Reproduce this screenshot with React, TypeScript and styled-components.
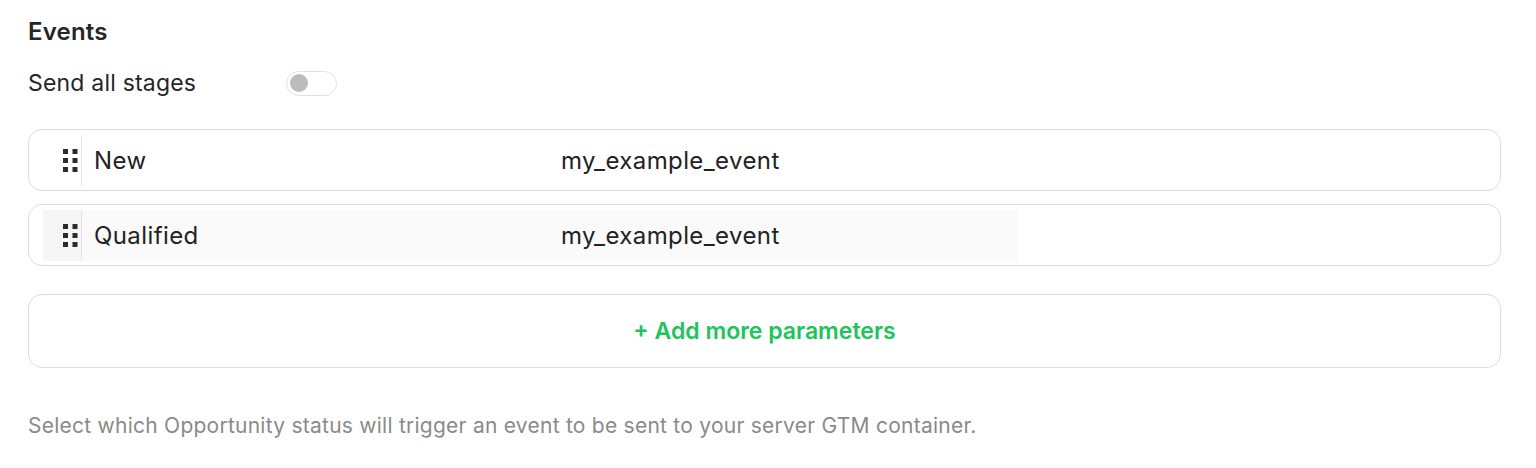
import React from "react";
import styled, { createGlobalStyle } from "styled-components";

const GlobalStyle = createGlobalStyle`
  body {
    margin: 0;
    background: #ffffff;
    font-family: Inter, "Liberation Sans", sans-serif;
    color: #222;
  }
`;

const Page = styled.div`
  padding: 19px 35px 0 28px;
`;

const Title = styled.h2`
  margin: 0;
  font-size: 24px;
  line-height: 26px;
  font-weight: 600;
  letter-spacing: 0.2px;
  color: #262626;
`;

const ToggleRow = styled.div`
  display: flex;
  align-items: center;
  margin-top: 25px;
  height: 26px;
`;

const ToggleLabel = styled.span`
  width: 258px;
  font-size: 23px;
  letter-spacing: 0.2px;
  color: #262626;
`;

const Switch = styled.div`
  width: 46px;
  height: 23px;
  border: 1px solid #e2e2e2;
  border-radius: 13px;
  display: flex;
  align-items: center;
  padding-left: 3px;
  box-sizing: content-box;
`;

const Knob = styled.div`
  width: 18px;
  height: 18px;
  border-radius: 50%;
  background: #bcbcbc;
`;

const List = styled.div`
  display: flex;
  flex-direction: column;
  gap: 13px;
  margin-top: 33px;
`;

const Row = styled.div`
  border: 1px solid #dcdcdc;
  border-radius: 14px;
  padding: 5px 0 4px 14px;
  display: flex;
`;

const Handle = styled.div<{ active: boolean }>`
  width: 39px;
  height: 51px;
  display: flex;
  align-items: center;
  justify-content: flex-end;
  padding-right: 3px;
  box-sizing: border-box;
  background: ${(p) => (p.active ? "#f6f6f6" : "transparent")};
  border-right: 1px solid #e4e4e4;
`;

const Cell = styled.div<{ active: boolean; width: number }>`
  width: ${(p) => p.width}px;
  height: 51px;
  display: flex;
  align-items: center;
  padding-left: 12px;
  box-sizing: border-box;
  font-size: 24px;
  letter-spacing: 0.4px;
  color: #222;
  background: ${(p) => (p.active ? "#fafafa" : "transparent")};
`;

const AddButton = styled.button`
  margin-top: 28px;
  width: 100%;
  height: 74px;
  border: 1px solid #dcdcdc;
  border-radius: 14px;
  background: #fff;
  color: #21c45a;
  font-family: inherit;
  font-size: 23px;
  font-weight: 600;
  cursor: pointer;
`;

const Hint = styled.p`
  margin: 46px 0 0;
  font-size: 21px;
  line-height: 24px;
  letter-spacing: 0.25px;
  color: #8a8a8a;
`;

const Dots = () => (
  <svg width="15" height="23" viewBox="0 0 15 23">
    {[0, 9, 18].map((y) =>
      [0, 9.5].map((x) => (
        <rect key={`${x}-${y}`} x={x} y={y} width="5" height="5" fill="#2b2b2b" />
      ))
    )}
  </svg>
);

const events = [
  { stage: "New", name: "my_example_event", active: false },
  { stage: "Qualified", name: "my_example_event", active: true },
];

const App = () => {
  return (
    <Page>
      <GlobalStyle />
      <Title>Events</Title>
      <ToggleRow>
        <ToggleLabel>Send all stages</ToggleLabel>
        <Switch>
          <Knob />
        </Switch>
      </ToggleRow>
      <List>
        {events.map((ev) => (
          <Row key={ev.stage}>
            <Handle active={ev.active}>
              <Dots />
            </Handle>
            <Cell active={ev.active} width={467}>
              {ev.stage}
            </Cell>
            <Cell active={ev.active} width={469}>
              {ev.name}
            </Cell>
          </Row>
        ))}
      </List>
      <AddButton>+ Add more parameters</AddButton>
      <Hint>
        Select which Opportunity status will trigger an event to be sent to your server GTM container.
      </Hint>
    </Page>
  );
};

export default App;
